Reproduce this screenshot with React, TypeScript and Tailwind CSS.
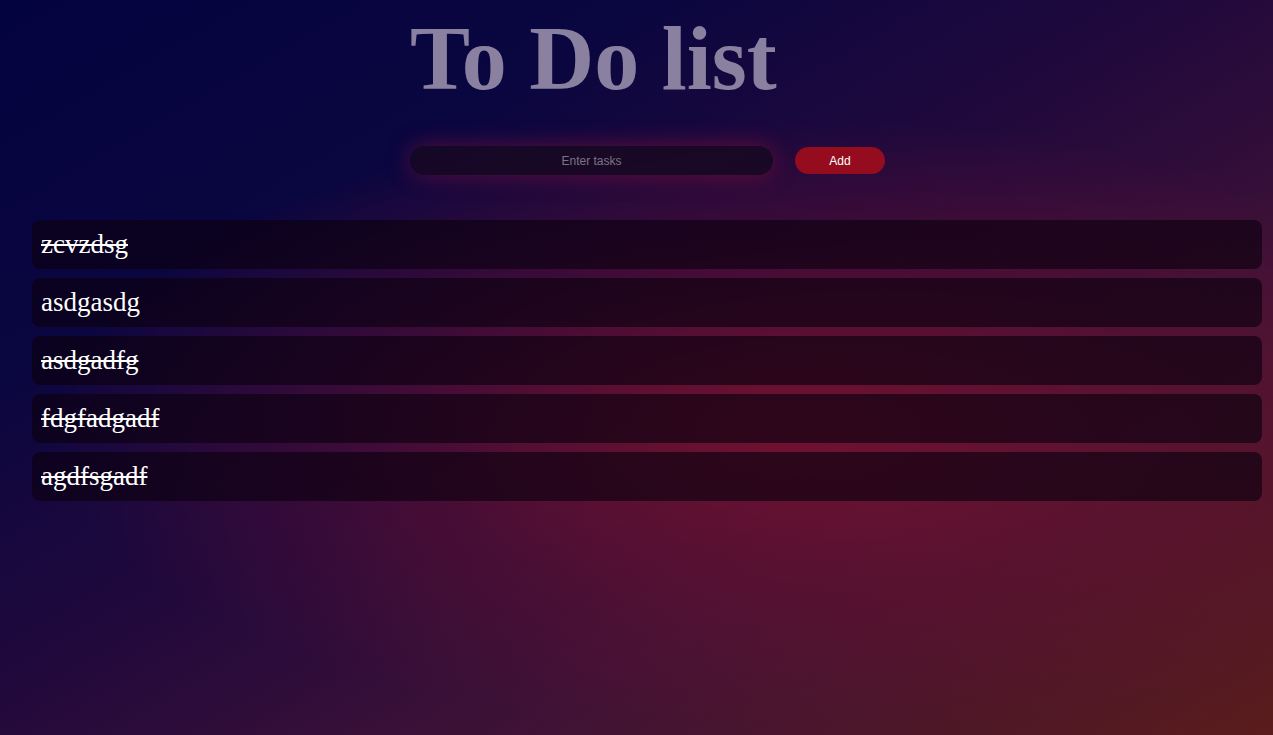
import * as React from "react";

type Task = {
  id: number;
  text: string;
  done: boolean;
};

const initialTasks: Task[] = [
  { id: 1, text: "zcvzdsg", done: true },
  { id: 2, text: "asdgasdg", done: false },
  { id: 3, text: "asdgadfg", done: true },
  { id: 4, text: "fdgfadgadf", done: true },
  { id: 5, text: "agdfsgadf", done: true },
];

export default function App() {
  const [tasks, setTasks] = React.useState<Task[]>(initialTasks);
  const [value, setValue] = React.useState("");

  const addTask = () => {
    if (!value.trim()) return;
    setTasks((t) => [...t, { id: Date.now(), text: value, done: false }]);
    setValue("");
  };

  const toggle = (id: number) =>
    setTasks((t) => t.map((x) => (x.id === id ? { ...x, done: !x.done } : x)));

  return (
    <div className="relative min-h-screen overflow-hidden bg-[linear-gradient(150deg,#03033f_0%,#0a0640_25%,#22093c_48%,#3f1236_70%,#5a1c1c_100%)]">
      <div className="pointer-events-none absolute inset-0 bg-[radial-gradient(ellipse_58%_42%_at_62%_58%,rgba(130,18,45,0.8)_0%,rgba(115,16,45,0.4)_55%,rgba(90,10,40,0)_100%)]" />
      <div className="relative flex flex-col">
        <h1 className="ml-[410px] mt-[9px] font-['Liberation_Serif',serif] text-[90px] font-bold leading-[100px] text-[#8a80a0]">
          To Do list
        </h1>
        <div className="ml-[410px] mt-[37px] flex items-center gap-[22px]">
          <input
            value={value}
            onChange={(e) => setValue(e.target.value)}
            placeholder="Enter tasks"
            className="h-[29px] w-[363px] rounded-full bg-[#170822]/85 text-center font-['Liberation_Sans',sans-serif] text-[12px] text-white shadow-[0_0_22px_rgba(160,20,60,0.5)] outline-none placeholder:text-[#7c7484]"
          />
          <button
            onClick={addTask}
            className="h-[27px] w-[90px] rounded-full bg-[#960c1f] font-['Liberation_Sans',sans-serif] text-[12px] text-white"
          >
            Add
          </button>
        </div>
        <ul className="mx-[32px] mr-[11px] mt-[45px] flex flex-col gap-[9px]">
          {tasks.map((task) => (
            <li
              key={task.id}
              onClick={() => toggle(task.id)}
              className="flex h-[49px] cursor-pointer items-center rounded-[8px] bg-[#0a0010]/65 px-[9px] font-['Liberation_Serif',serif] text-[27px] text-white"
            >
              <span className={task.done ? "line-through" : ""}>{task.text}</span>
            </li>
          ))}
        </ul>
      </div>
    </div>
  );
}
